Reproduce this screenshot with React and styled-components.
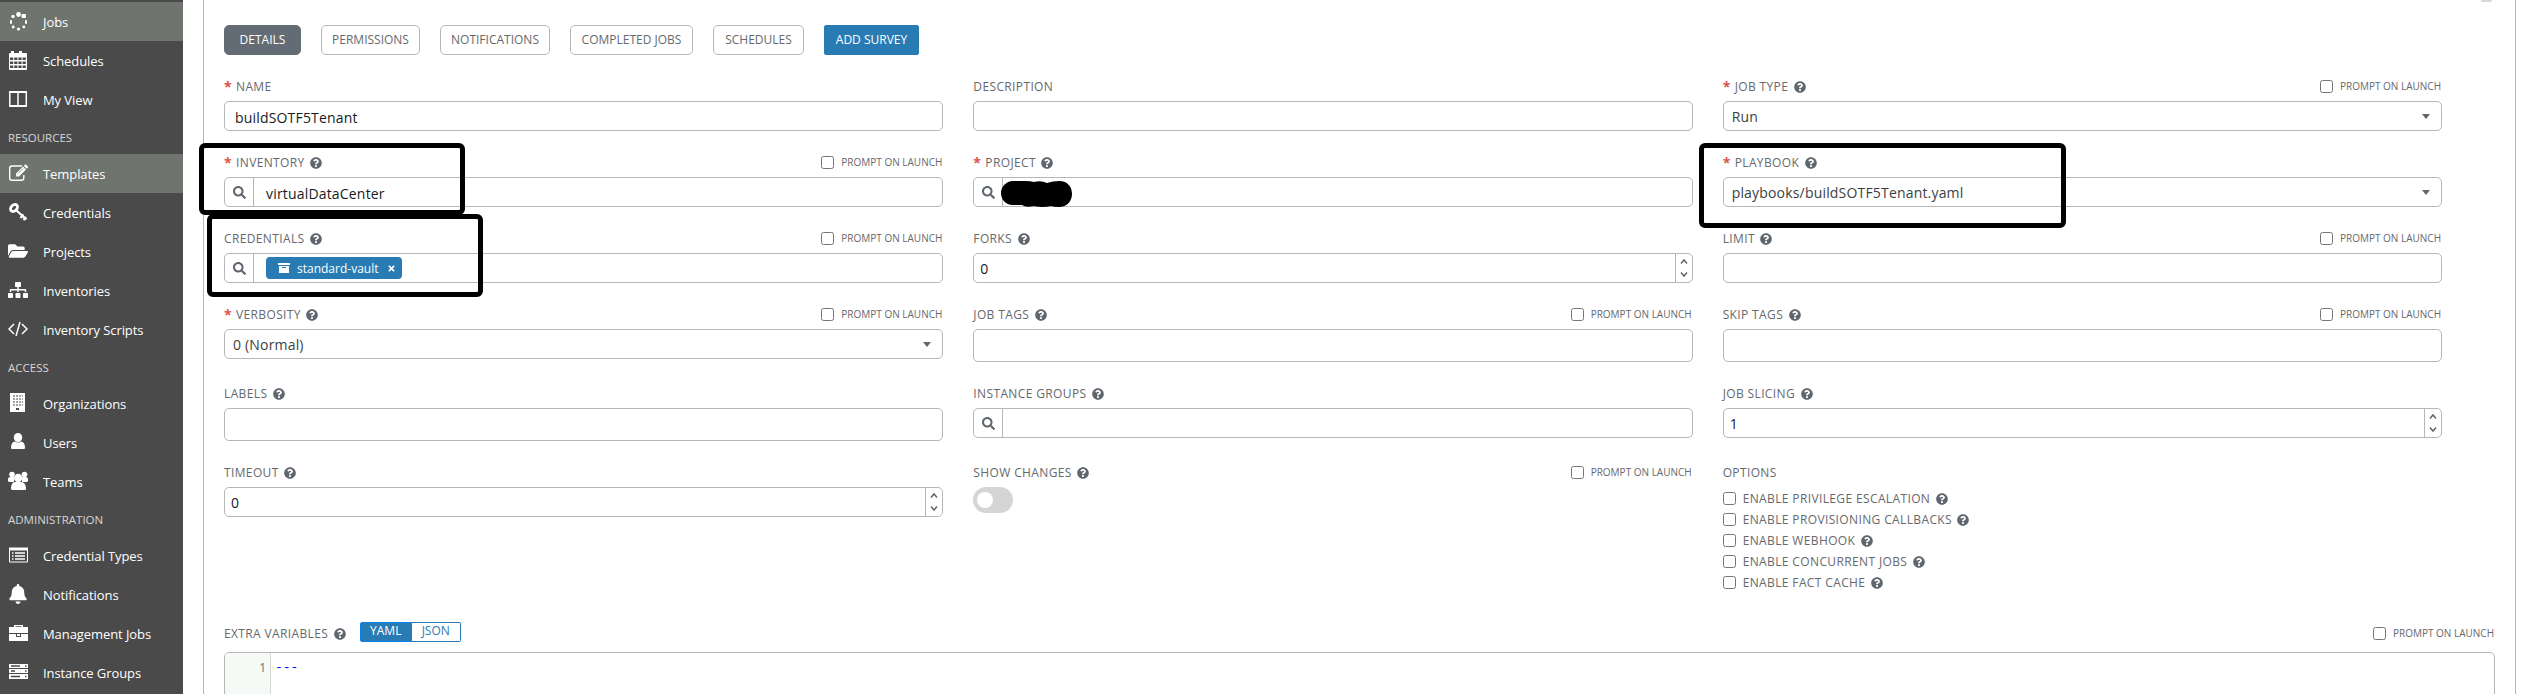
import React from "react";
import styled, { createGlobalStyle } from "styled-components";
import {
  FaQuestionCircle,
  FaSearch,
  FaFolderOpen,
  FaSitemap,
  FaBell,
  FaTimes,
} from "react-icons/fa";

const Global = createGlobalStyle`
  *, *::before, *::after { box-sizing: border-box; }
  body {
    margin: 0;
    background: #fff;
    font-family: "Open Sans", "Noto Sans", sans-serif;
    color: #161b1f;
    overflow: hidden;
  }
`;

const Shell = styled.div`
  position: relative;
  display: flex;
  height: 694px;
  overflow: hidden;
`;

const Sidebar = styled.nav`
  flex: 0 0 183px;
  padding-top: 2px;
  background: #4a4a4a;
`;

const NavItem = styled.a`
  display: flex;
  align-items: center;
  height: 39px;
  padding: 1px 0 0 8px;
  color: #fff;
  font-size: 13px;
  letter-spacing: -0.08px;
  line-height: 20px;
  white-space: nowrap;
  background: ${(p) => (p.$active ? "#6f746f" : "transparent")};
`;

const NavIcon = styled.span`
  display: flex;
  align-items: center;
  flex: 0 0 35px;
  height: 22px;
  padding-bottom: 2px;
  svg { display: block; width: 20px; height: 20px; }
`;

const NavHeading = styled.div`
  height: 35px;
  padding: 1px 0 0 8px;
  color: #d7d7d7;
  font-size: 11.5px;
  line-height: 35px;
`;

const Panel = styled.main`
  flex: 0 0 2313px;
  margin-left: 20px;
  border: solid #b7b7b7;
  border-width: 0 1px;
  padding: 0 20px;
`;

const CloseRow = styled.div`
  display: flex;
  justify-content: flex-end;
  height: 25px;
  padding-right: 3px;
`;

const CloseTail = styled.span`
  width: 11px;
  height: 2px;
  background: #d7d7d7;
  border-radius: 0 0 4px 4px;
`;

const Tabs = styled.div`
  display: flex;
  gap: 20px;
  height: 30px;
  margin-bottom: 20px;
`;

const Tab = styled.button`
  width: ${(p) => p.$w}px;
  height: 30px;
  padding: 0 0 1px;
  border: 1px solid ${(p) => (p.$solid ? p.$solid : "#b7b7b7")};
  border-radius: ${(p) => (p.$square ? 2 : 5)}px;
  background: ${(p) => p.$solid || "#fff"};
  color: ${(p) => (p.$solid ? "#fff" : "#66696c")};
  font: 12px "Open Sans", sans-serif;
  white-space: nowrap;
`;

const Form = styled.form`
  display: grid;
  grid-template-columns: repeat(3, 1fr);
  column-gap: 30px;
  width: 2218px;
`;

const Field = styled.div`
  min-width: 0;
  padding-bottom: 20px;
`;

const LabelRow = styled.div`
  display: flex;
  justify-content: space-between;
  height: 26px;
`;

const Label = styled.label`
  display: flex;
  align-items: center;
  height: 23px;
  color: #66696c;
  font-size: 12px;
  letter-spacing: 0.37px;
  white-space: nowrap;
`;

const Star = styled.span`
  width: 12px;
  color: #d9534f;
  font-size: 14px;
  font-weight: 700;
`;

const HelpIcon = styled(FaQuestionCircle)`
  width: 12px;
  height: 12px;
  margin-left: 5.5px;
  color: #5f666e;
`;

const Prompt = styled.label`
  display: flex;
  height: 23px;
  align-items: center;
  color: #66696c;
  font-size: 10px;
  white-space: nowrap;
`;

const PromptText = styled.span`
  width: 102px;
  padding-bottom: 2px;
`;

const Checkbox = styled.span`
  width: 13px;
  height: 13px;
  margin-right: 7px;
  border: 1px solid #767676;
  border-radius: 2.5px;
  background: #fff;
`;

const Control = styled.div`
  display: flex;
  align-items: center;
  height: ${(p) => p.$h || 30}px;
  border: 1px solid #b7b7b7;
  border-radius: 5px;
  overflow: hidden;
  background: #fff;
  font-size: 14px;
  letter-spacing: 0.18px;
`;

const Value = styled.span`
  flex: 1;
  padding-left: ${(p) => p.$pad || 10}px;
  padding-top: ${(p) => p.$drop || 0}px;
  color: ${(p) => p.$color || "#161b1f"};
  white-space: nowrap;
`;

const Lookup = styled.span`
  display: flex;
  align-items: center;
  justify-content: center;
  width: 29px;
  height: 100%;
  border-right: 1px solid #b7b7b7;
  color: #5f666e;
  svg { width: 13px; height: 13px; }
`;

const Caret = styled.span`
  margin-right: 11px;
  border: 4px solid transparent;
  border-top: 5px solid #5f666e;
  border-bottom: 0;
`;

const Spinner = styled.span`
  display: flex;
  align-items: center;
  justify-content: center;
  width: 17px;
  height: 100%;
  border-left: 1px solid #b7b7b7;
`;

const Tag = styled.span`
  display: flex;
  align-items: center;
  width: 136px;
  height: 22px;
  margin-left: 12px;
  padding: 0 6px 0 12px;
  border-radius: 4px;
  background: #287bb3;
  color: #fff;
  font-size: 12px;
  letter-spacing: 0;
`;

const TagText = styled.span`
  flex: 1;
  padding-left: 7px;
`;

const Toggle = styled.span`
  display: flex;
  align-items: center;
  width: 40px;
  height: 26px;
  padding-left: 4px;
  border-radius: 13px;
  background: #d5d5d5;
  &::after {
    content: "";
    width: 16px;
    height: 16px;
    border-radius: 8px;
    background: #fff;
  }
`;

const Options = styled.div`
  display: flex;
  flex-direction: column;
  padding-top: 1px;
`;

const Option = styled(Label)`
  height: 21px;
`;

const ExtraHead = styled.div`
  display: flex;
  justify-content: space-between;
  height: 39px;
  padding-top: 9px;
`;

const ExtraLeft = styled.div`
  display: flex;
  align-items: flex-start;
`;

const Modes = styled.div`
  display: flex;
  margin-left: 14px;
`;

const Mode = styled.button`
  width: ${(p) => p.$w}px;
  height: 20px;
  padding: 0 0 2px;
  border: 1px solid ${(p) => (p.$on ? "#0a7ff0" : "#287bb3")};
  border-left-width: ${(p) => (p.$on ? 1 : 0)}px;
  border-radius: ${(p) => (p.$on ? "2px 0 0 2px" : "0 2px 2px 0")};
  background: ${(p) => (p.$on ? "#287bb3" : "#fff")};
  color: ${(p) => (p.$on ? "#fff" : "#287bb3")};
  font: 12px/16px "Open Sans", sans-serif;
`;

const Editor = styled.div`
  display: flex;
  height: 60px;
  border: 1px solid #b7b7b7;
  border-radius: 5px;
  overflow: hidden;
  font: 12px/17px "Noto Sans", "DejaVu Sans", sans-serif;
`;

const Gutter = styled.span`
  width: 46px;
  padding: 6px 4px 0 0;
  border-right: 1px solid #d7d7d7;
  background: #f6faf7;
  color: #777;
  text-align: right;
`;

const Code = styled.span`
  padding: 6px 0 0 4px;
  color: #0000ff;
  font: 13px/17px "Liberation Mono", monospace;
`;

const Highlight = styled.div`
  position: absolute;
  left: ${(p) => p.$x}px;
  top: ${(p) => p.$y}px;
  width: ${(p) => p.$w}px;
  height: ${(p) => p.$h}px;
  border: 5px solid #000;
  border-radius: 6px;
`;

const Redaction = styled.svg`
  position: absolute;
  left: 1001px;
  top: 181px;
  width: 71px;
  height: 26px;
`;

const JobsIcon = () => (
  <svg viewBox="0 0 20 20" fill="#fff">
    <circle cx="10.500" cy="3.500" r="2.400" /><rect x="13.500" y="3" width="4.500" height="4" rx="1" />
    <circle cx="5" cy="5.500" r="1.700" /><rect x="2" y="9" width="2" height="4" rx="1" />
    <rect x="17" y="9" width="2" height="4" rx="1" /><circle cx="5.200" cy="16" r="1.400" />
    <circle cx="10.500" cy="18" r="1.600" /><circle cx="15.800" cy="16" r="1.400" />
  </svg>
);

const CalendarIcon = () => (
  <svg viewBox="0 0 20 20">
    <path fill="#fff" d="M1 4q0-1 1-1h1V1h3v2h5V1h3v2h4q1 0 1 1v15q0 1-1 1H2q-1 0-1-1z" />
    <path stroke="#4a4a4a" strokeWidth="2.600" strokeDasharray="3.200 1" d="M2 8.800h16M2 12.800h16M2 16.700h16" />
  </svg>
);

const ColumnsIcon = () => (
  <svg viewBox="0 0 20 20" fill="none" stroke="#fff">
    <path strokeWidth="1.500" d="M1.800 3v14h16.500V3M10 3v14" /><path strokeWidth="2" d="M1 3h18M1.500 17h17" />
  </svg>
);

const EditIcon = () => (
  <svg viewBox="0 0 20 20">
    <path fill="none" stroke="#fff" strokeWidth="1.400" d="M14 3H4Q1.700 3 1.700 5.300V15Q1.700 17.300 4 17.300h9.500q2.300 0 2.300-2.300v-3" />
    <path fill="#fff" d="M8 10.500L15 3.500l3 3l-7 7H8zM15.800 2.800l1-1q.7-.7 1.400 0l1.600 1.600q.7.700 0 1.400l-1 1z" />
    <path stroke="#6f746f" strokeWidth=".8" d="M10 10.500l5-5" />
  </svg>
);

const KeyIcon = () => (
  <svg viewBox="0 0 20 20" fill="none" stroke="#fff">
    <ellipse cx="6" cy="6" rx="4" ry="2.900" strokeWidth="2.800" transform="rotate(-45 6 6)" />
    <path strokeWidth="2.200" d="M8.500 8.500L18.500 17.500M12.500 16l3-3.500M15.500 18l2.500-3" />
  </svg>
);

const CodeIcon = () => (
  <svg viewBox="0 0 20 20" fill="none" stroke="#fff" strokeWidth="1.500">
    <path d="M6 5L1 10l5 5M14 5l5 5l-5 5M12 3L8 17" />
  </svg>
);

const BuildingIcon = () => (
  <svg viewBox="0 0 20 20">
    <path fill="#fff" d="M2 0h15v19H2z" />
    <path stroke="#4a4a4a" strokeDasharray="2 1" d="M5 3h10M5 6h10M5 9h10M5 12h10" />
    <path fill="#4a4a4a" d="M8 15h3v2H8z" />
  </svg>
);

const UserIcon = () => (
  <svg viewBox="0 0 20 20" fill="#fff">
    <ellipse cx="10" cy="5.500" rx="4.200" ry="4.500" />
    <path d="M3 16q0-6 4-6.500q3 2 6 0q4 .5 4 6.500q0 1-1 1H4q-1 0-1-1z" />
  </svg>
);

const TeamIcon = () => (
  <svg viewBox="0 0 20 20" fill="#fff">
    <circle cx="4" cy="3.500" r="2.800" /><circle cx="16.500" cy="3.500" r="2.800" />
    <path d="M0 10V8q0-2 3-2h3v5H1zM20 10V8q0-2-3-2h-3v5h5z" />
    <circle cx="10.200" cy="7" r="4.200" />
    <path d="M3 18q0-7 4-7h6q5 0 5 7q0 1-1 1H4z" />
  </svg>
);

const ListIcon = () => (
  <svg viewBox="0 0 20 20" fill="none" stroke="#fff">
    <path d="M1.500 3.500h18v13.500h-18z" /><path d="M1 4h19" strokeWidth="3" />
    <path strokeWidth="1.300" d="M4 8h1.500M7 8h10M4 11h1.500M7 11h10M4 14h1.500M7 14h10" />
  </svg>
);

const CaseIcon = () => (
  <svg viewBox="0 0 20 20">
    <path fill="#fff" fillRule="evenodd" d="M1 4h5V2h9v2h5v6H1zM1 11h7v3h5v-3h7v7H1zM9 11h3v2H9zM7.500 3.200V4h6v-.8z" />
  </svg>
);

const ServersIcon = () => (
  <svg viewBox="0 0 20 20">
    <path fill="#fff" d="M1 2h19v4H1zM1 7h19v4H1zM1 12h19v5H1z" />
    <path stroke="#4a4a4a" strokeWidth="1.500" d="M3 4h9M3 9h4M3 14.500h9M17 4h1.500M17 9h1.500M17 14.500h1.500" />
  </svg>
);

const NAV = [
  { text: "Jobs", icon: <JobsIcon />, active: true },
  { text: "Schedules", icon: <CalendarIcon /> },
  { text: "My View", icon: <ColumnsIcon /> },
  { heading: "RESOURCES" },
  { text: "Templates", icon: <EditIcon />, active: true },
  { text: "Credentials", icon: <KeyIcon /> },
  { text: "Projects", icon: <FaFolderOpen /> },
  { text: "Inventories", icon: <FaSitemap /> },
  { text: "Inventory Scripts", icon: <CodeIcon /> },
  { heading: "ACCESS" },
  { text: "Organizations", icon: <BuildingIcon /> },
  { text: "Users", icon: <UserIcon /> },
  { text: "Teams", icon: <TeamIcon /> },
  { heading: "ADMINISTRATION" },
  { text: "Credential Types", icon: <ListIcon /> },
  { text: "Notifications", icon: <FaBell /> },
  { text: "Management Jobs", icon: <CaseIcon /> },
  { text: "Instance Groups", icon: <ServersIcon /> },
];

const OPTIONS = [
  "ENABLE PRIVILEGE ESCALATION",
  "ENABLE PROVISIONING CALLBACKS",
  "ENABLE WEBHOOK",
  "ENABLE CONCURRENT JOBS",
  "ENABLE FACT CACHE",
];

const PromptOnLaunch = () => (
  <Prompt><Checkbox /><PromptText>PROMPT ON LAUNCH</PromptText></Prompt>
);

const FormField = ({ label, required, help = true, prompt, children }) => (
  <Field>
    <LabelRow>
      <Label>
        {required && <Star>*</Star>}
        {label}
        {help && <HelpIcon />}
      </Label>
      {prompt && <PromptOnLaunch />}
    </LabelRow>
    {children}
  </Field>
);

const SelectBox = ({ children }) => (
  <Control>
    <Value $pad={8} $color="#3a3f44">{children}</Value>
    <Caret />
  </Control>
);

const NumberBox = ({ children }) => (
  <Control>
    <Value $pad={6} $drop={1}>{children}</Value>
    <Spinner>
      <svg width="8" height="20" fill="none" stroke="#5f666e" strokeWidth="1.500">
        <path d="M1 5.500L4 2l3 3.500M1 14.500L4 18l3-3.500" />
      </svg>
    </Spinner>
  </Control>
);

const LookupBox = ({ children }) => (
  <Control>
    <Lookup><FaSearch /></Lookup>
    {children}
  </Control>
);

export default function App() {
  return (
    <Shell>
      <Global />
      <Sidebar>
        {NAV.map((n) =>
          n.heading ? (
            <NavHeading key={n.heading}>{n.heading}</NavHeading>
          ) : (
            <NavItem key={n.text} $active={n.active}>
              <NavIcon>{n.icon}</NavIcon>
              {n.text}
            </NavItem>
          )
        )}
      </Sidebar>
      <Panel>
        <CloseRow><CloseTail /></CloseRow>
        <Tabs>
          <Tab $w={77} $solid="#636b74">DETAILS</Tab>
          <Tab $w={99}>PERMISSIONS</Tab>
          <Tab $w={110}>NOTIFICATIONS</Tab>
          <Tab $w={123}>COMPLETED JOBS</Tab>
          <Tab $w={91}>SCHEDULES</Tab>
          <Tab $w={95} $solid="#287bb3" $square>ADD SURVEY</Tab>
        </Tabs>
        <Form>
          <FormField label="NAME" required help={false}>
            <Control><Value $drop={2}>buildSOTF5Tenant</Value></Control>
          </FormField>
          <FormField label="DESCRIPTION" help={false}><Control /></FormField>
          <FormField label="JOB TYPE" required prompt><SelectBox>Run</SelectBox></FormField>

          <FormField label="INVENTORY" required prompt>
            <LookupBox><Value $pad={12} $drop={2}>virtualDataCenter</Value></LookupBox>
          </FormField>
          <FormField label="PROJECT" required><LookupBox /></FormField>
          <FormField label="PLAYBOOK" required>
            <SelectBox>playbooks/buildSOTF5Tenant.yaml</SelectBox>
          </FormField>

          <FormField label="CREDENTIALS" prompt>
            <LookupBox>
              <Tag>
                <svg width="12" height="10" fill="#fff">
                  <path d="M0 0h12v2H0zM1 3h10v7H1zM4 4v1h4V4z" fillRule="evenodd" />
                </svg>
                <TagText>standard-vault</TagText>
                <FaTimes size={9} />
              </Tag>
            </LookupBox>
          </FormField>
          <FormField label="FORKS"><NumberBox>0</NumberBox></FormField>
          <FormField label="LIMIT" prompt><Control /></FormField>

          <FormField label="VERBOSITY" required prompt><SelectBox>0 (Normal)</SelectBox></FormField>
          <FormField label="JOB TAGS" prompt><Control $h={33} /></FormField>
          <FormField label="SKIP TAGS" prompt><Control $h={33} /></FormField>

          <FormField label="LABELS"><Control $h={33} /></FormField>
          <FormField label="INSTANCE GROUPS"><LookupBox /></FormField>
          <FormField label="JOB SLICING"><NumberBox>1</NumberBox></FormField>

          <FormField label="TIMEOUT"><NumberBox>0</NumberBox></FormField>
          <FormField label="SHOW CHANGES" prompt><Toggle /></FormField>
          <FormField label="OPTIONS" help={false}>
            <Options>
              {OPTIONS.map((o) => (
                <Option key={o}><Checkbox />{o}<HelpIcon /></Option>
              ))}
            </Options>
          </FormField>
        </Form>
        <ExtraHead>
          <ExtraLeft>
            <Label>EXTRA VARIABLES<HelpIcon /></Label>
            <Modes>
              <Mode $w={52} $on>YAML</Mode>
              <Mode $w={49}>JSON</Mode>
            </Modes>
          </ExtraLeft>
          <PromptOnLaunch />
        </ExtraHead>
        <Editor>
          <Gutter>1</Gutter>
          <Code>---</Code>
        </Editor>
      </Panel>
      <Redaction viewBox="0 0 71 26">
        <path d="M12 0H24Q30 0 33 1Q40-1 46 2Q52 0 58 0C67 0 71 6 71 13S66 26 58 26Q53 26 50 25Q42 27 33 25Q25 27 21 24H12C4 24 0 18 0 12S5 0 12 0z" />
      </Redaction>
      <Highlight $x={199} $y={143} $w={266} $h={72} />
      <Highlight $x={207} $y={214} $w={276} $h={83} />
      <Highlight $x={1699} $y={143} $w={367} $h={85} />
    </Shell>
  );
}
